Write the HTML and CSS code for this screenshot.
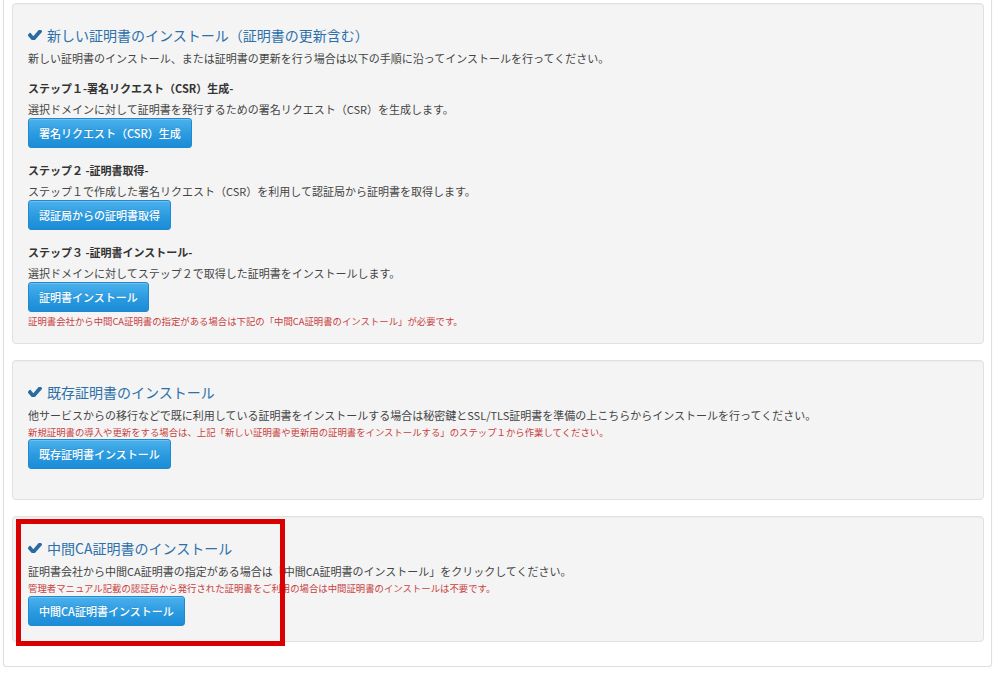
FILE: index.html
```html
<!DOCTYPE html>
<html lang="ja">
<head>
<meta charset="utf-8">
<title>SSL証明書のインストール</title>
<link rel="stylesheet" href="styles.css">
</head>
<body>
<div class="panel">
  <section class="well well-first">
    <h3 class="well-title"><svg class="check" viewBox="129 430 1542 960" preserveAspectRatio="none" aria-hidden="true"><path d="M1671 566q0 40-28 68l-724 724-136 136q-28 28-68 28t-68-28l-136-136-362-362q-28-28-28-68t28-68l136-136q28-28 68-28t68 28l294 295 656-657q28-28 68-28t68 28l136 136q28 28 28 68z"/></svg>新しい証明書のインストール（証明書の更新含む）</h3>
    <p class="intro">新しい証明書のインストール、または証明書の更新を行う場合は以下の手順に沿ってインストールを行ってください。</p>

    <div class="step">
      <h4 class="step-title">ステップ１-署名リクエスト（CSR）生成-</h4>
      <p class="step-desc">選択ドメインに対して証明書を発行するための署名リクエスト（CSR）を生成します。</p>
      <button class="btn">署名リクエスト（CSR）生成</button>
    </div>

    <div class="step">
      <h4 class="step-title">ステップ２ -証明書取得-</h4>
      <p class="step-desc">ステップ１で作成した署名リクエスト（CSR）を利用して認証局から証明書を取得します。</p>
      <button class="btn">認証局からの証明書取得</button>
    </div>

    <div class="step">
      <h4 class="step-title">ステップ３ -証明書インストール-</h4>
      <p class="step-desc">選択ドメインに対してステップ２で取得した証明書をインストールします。</p>
      <button class="btn">証明書インストール</button>
      <p class="note">証明書会社から中間CA証明書の指定がある場合は下記の「中間CA証明書のインストール」が必要です。</p>
    </div>
  </section>

  <section class="well well-second">
    <h3 class="well-title"><svg class="check" viewBox="129 430 1542 960" preserveAspectRatio="none" aria-hidden="true"><path d="M1671 566q0 40-28 68l-724 724-136 136q-28 28-68 28t-68-28l-136-136-362-362q-28-28-28-68t28-68l136-136q28-28 68-28t68 28l294 295 656-657q28-28 68-28t68 28l136 136q28 28 28 68z"/></svg>既存証明書のインストール</h3>
    <p class="intro">他サービスからの移行などで既に利用している証明書をインストールする場合は秘密鍵とSSL/TLS証明書を準備の上こちらからインストールを行ってください。</p>
    <p class="note">新規証明書の導入や更新をする場合は、上記「新しい証明書や更新用の証明書をインストールする」のステップ１から作業してください。</p>
    <button class="btn">既存証明書インストール</button>
  </section>

  <section class="well well-third">
    <h3 class="well-title"><svg class="check" viewBox="129 430 1542 960" preserveAspectRatio="none" aria-hidden="true"><path d="M1671 566q0 40-28 68l-724 724-136 136q-28 28-68 28t-68-28l-136-136-362-362q-28-28-28-68t28-68l136-136q28-28 68-28t68 28l294 295 656-657q28-28 68-28t68 28l136 136q28 28 28 68z"/></svg>中間CA証明書のインストール</h3>
    <p class="intro">証明書会社から中間CA証明書の指定がある場合は「中間CA証明書のインストール」をクリックしてください。</p>
    <p class="note">管理者マニュアル記載の認証局から発行された証明書をご利用の場合は中間証明書のインストールは不要です。</p>
    <button class="btn btn-ca">中間CA証明書インストール</button>
    <div class="highlight"></div>
  </section>
</div>
</body>
</html>
```

FILE: styles.css
```css
* { box-sizing: border-box; }

html, body {
  margin: 0;
  padding: 0;
  background: #ffffff;
}

body {
  font-family: "Noto Sans CJK JP", "Noto Sans", "Liberation Sans", sans-serif;
  font-size: 11px;
  color: #444444;
}

.panel {
  width: 989px;
  margin-left: 3px;
  padding: 3px 7px 24px 8px;
  background: #ffffff;
  border: 1px solid #dedede;
  border-top: none;
  border-radius: 0 0 4px 4px;
  box-shadow: 0 1px 2px rgba(0, 0, 0, 0.05);
}

.well {
  position: relative;
  background: #f4f4f4;
  border: 1px solid #e1e1e1;
  border-radius: 4px;
  box-shadow: inset 0 1px 1px rgba(0, 0, 0, 0.03);
  padding: 21px 15px 15px;
  margin-bottom: 16px;
}

.well:last-child { margin-bottom: 0; }

.well-second { padding-bottom: 30px; }
.well-third { padding-bottom: 15px; }

.well-title {
  margin: 0 0 5px;
  font-size: 14px;
  line-height: 20px;
  font-weight: normal;
  color: #2c70aa;
  display: flex;
  align-items: center;
}

.check {
  width: 14px;
  height: 10px;
  margin-right: 5px;
  fill: #2a6aa2;
  flex: none;
}

.intro {
  margin: 0;
  line-height: 16px;
}

.step { margin-top: 14px; }

.step-title {
  margin: 0;
  font-size: 11px;
  line-height: 16px;
  font-weight: bold;
  color: #333333;
}

.step-desc {
  margin: 5px 0 0;
  line-height: 17px;
}

.btn {
  display: block;
  height: 30px;
  padding: 0 10px;
  font-family: inherit;
  font-size: 11px;
  font-weight: 500;
  line-height: 28px;
  color: #ffffff;
  background: linear-gradient(to bottom, #4cb1ec 0%, #2a9ae0 55%, #1b8cd6 100%);
  border: 1px solid #1f88cf;
  border-radius: 3px;
  box-shadow: inset 0 1px 0 rgba(255, 255, 255, 0.2);
  text-shadow: 0 -1px 0 rgba(0, 0, 0, 0.1);
  cursor: pointer;
}

.note {
  margin: 2px 0 0;
  font-size: 9.4px;
  line-height: 14px;
  color: #c8403e;
}

.well-third .btn { margin-top: 1px; }

.highlight {
  position: absolute;
  left: 3px;
  top: 2px;
  width: 269px;
  height: 127px;
  border: 5px solid #d80000;
  pointer-events: none;
}
```
